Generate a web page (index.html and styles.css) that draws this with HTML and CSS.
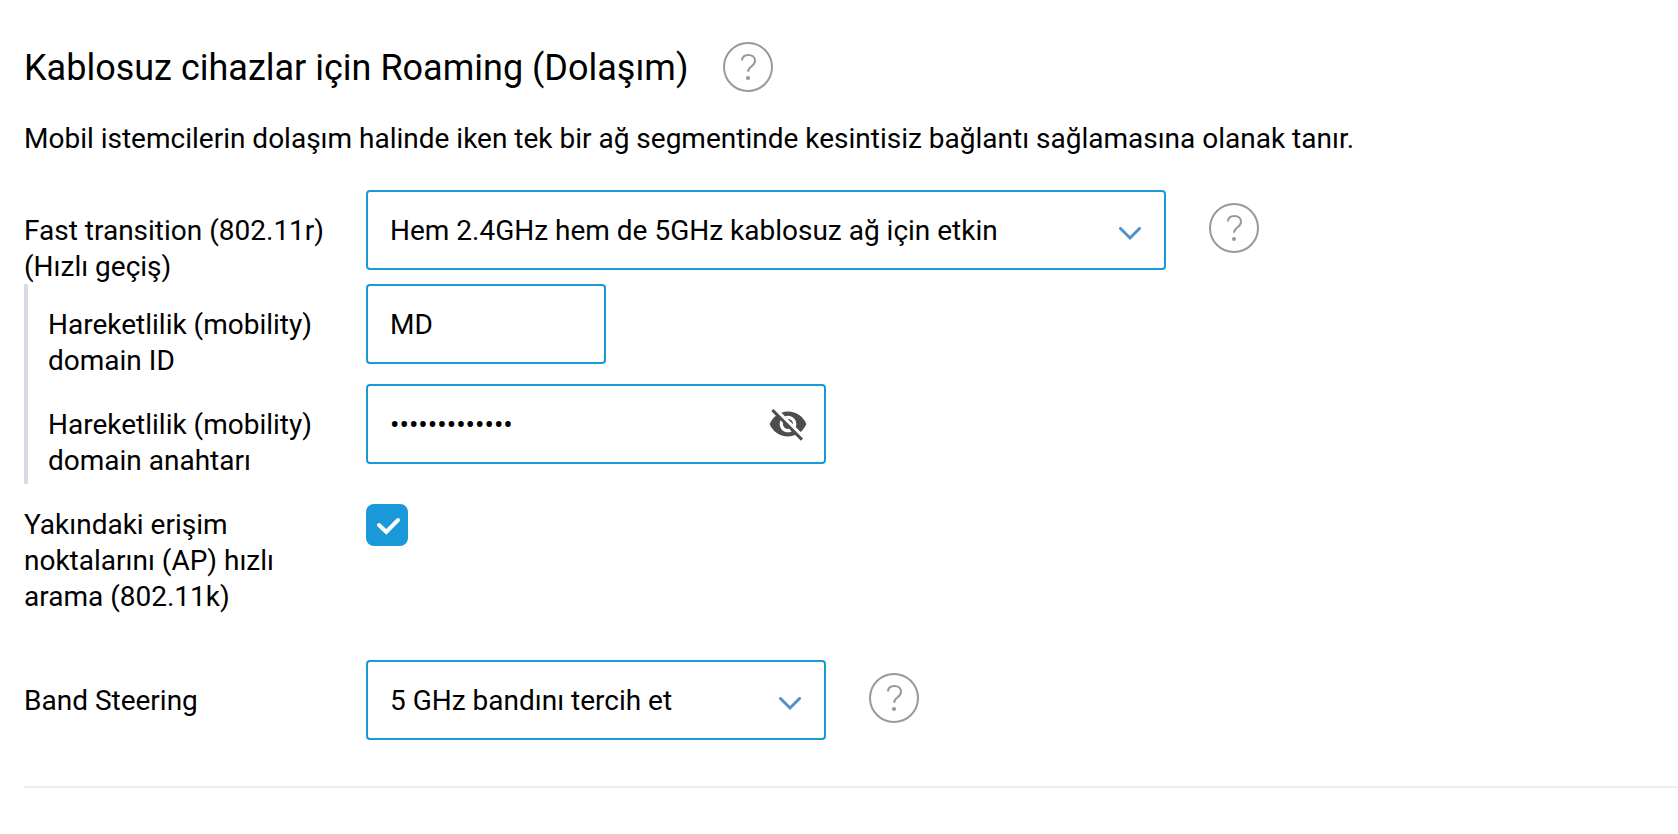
FILE: index.html
```html
<!DOCTYPE html>
<html lang="tr">
  <head>
    <meta charset="utf-8">
    <title>Kablosuz cihazlar için Roaming</title>
    <link rel="stylesheet" href="styles.css">
  </head>
  <body>
    <!-- shared icons -->
    <svg class="sprite" aria-hidden="true">
      <symbol id="icon-help" viewBox="0 0 50 50">
        <circle cx="25" cy="25" r="24" fill="none" stroke="currentColor" stroke-width="2" />
        <path d="M19 18.5c.2-3.400 2.700-5.500 6.400-5.500 3.900 0 6.600 2.200 6.600 5.700 0 2.600-1.300 4-3.400 5.600-2.300 1.700-3.500 3-3.500 5.500" fill="none" stroke="currentColor" stroke-width="2" />
        <circle cx="25" cy="36" r="2.100" fill="currentColor" />
      </symbol>
    </svg>

    <form class="roaming" action="">
      <div class="heading">
        <h1>Kablosuz cihazlar için Roaming (Dolaşım)</h1>
        <button type="button" class="help" aria-label="Yardım"><svg><use href="#icon-help" /></svg></button>
      </div>
      <p class="intro">Mobil istemcilerin dolaşım halinde iken tek bir ağ segmentinde kesintisiz bağlantı sağlamasına olanak tanır.</p>

      <div class="row">
        <label for="ft">Fast transition (802.11r) (Hızlı geçiş)</label>
        <div class="select wide">
          <select id="ft">
            <option>Hem 2.4GHz hem de 5GHz kablosuz ağ için etkin</option>
          </select>
          <svg class="arrow" viewBox="0 0 22 14"><path d="M1.500 1.500 11 11l9.500-9.500" /></svg>
        </div>
        <button type="button" class="help" aria-label="Yardım"><svg><use href="#icon-help" /></svg></button>
      </div>

      <div class="nested">
        <div class="row">
          <label for="mdid">Hareketlilik (mobility) domain ID</label>
          <input type="text" class="short" id="mdid" value="MD" autocomplete="off">
        </div>
        <div class="row">
          <label for="mdkey">Hareketlilik (mobility) domain anahtarı</label>
          <div class="password">
            <input type="password" id="mdkey" value="domainkey1234" autocomplete="off">
            <button type="button" class="eye" aria-label="Göster">
              <svg viewBox="0 0 24 24"><path d="M12 7c2.760 0 5 2.240 5 5 0 .65-.13 1.260-.36 1.830l2.920 2.920c1.510-1.260 2.700-2.890 3.430-4.750-1.730-4.390-6-7.500-11-7.500-1.400 0-2.740.25-3.980.7l2.160 2.160C10.740 7.130 11.350 7 12 7zM2 4.270l2.280 2.280.46.46C3.080 8.300 1.780 10.020 1 12c1.730 4.390 6 7.500 11 7.500 1.550 0 3.030-.3 4.380-.84l.42.42L19.730 22 21 20.730 3.270 3 2 4.270zM7.530 9.800l1.550 1.550c-.05.21-.08.43-.08.65 0 1.660 1.340 3 3 3 .22 0 .44-.03.65-.08l1.550 1.550c-.67.33-1.410.53-2.200.53-2.760 0-5-2.240-5-5 0-.79.2-1.530.53-2.200zm4.310-.78l3.150 3.150.02-.16c0-1.660-1.340-3-3-3l-.17.01z" /></svg>
            </button>
          </div>
        </div>
      </div>

      <div class="row">
        <label for="rrm">Yakındaki erişim noktalarını (AP) hızlı arama (802.11k)</label>
        <div class="check">
          <input type="checkbox" id="rrm" checked>
          <svg viewBox="0 0 42 42"><path d="M13 21l7.300 7L32 16" /></svg>
        </div>
      </div>

      <div class="row band">
        <label for="bs">Band Steering</label>
        <div class="select">
          <select id="bs">
            <option>5 GHz bandını tercih et</option>
          </select>
          <svg class="arrow" viewBox="0 0 22 14"><path d="M1.500 1.500 11 11l9.500-9.500" /></svg>
        </div>
        <button type="button" class="help" aria-label="Yardım"><svg><use href="#icon-help" /></svg></button>
      </div>
      <hr>
    </form>
  </body>
</html>
```
FILE: styles.css
```css
* { box-sizing: border-box; }

body {
  margin: 0; background: #fff; color: #000;
  font-family: Roboto, "Liberation Sans", sans-serif; font-size: 28px; line-height: 36px;
}

.sprite { display: none; }

.roaming { padding: 42px 0 44px 24px; }

.heading { display: flex; align-items: center; }
.heading h1 { margin: 0; padding-top: 2px; font-size: 36px; font-weight: 400; line-height: 48px; }
.heading .help { margin: 0 0 0 35px; }

.intro { margin: 29px 0 33px; }

.row { display: flex; align-items: flex-start; }
.row > label { flex: none; width: 342px; padding-top: 23px; padding-right: 36px; margin-bottom: -1px; }

/* fields that depend on fast transition */
.nested { border-left: 4px solid #d7dbe5; padding-left: 20px; }
.nested .row { min-height: 100px; }
.nested .row > label { width: 318px; }

input[type=text], input[type=password], select {
  height: 80px; width: 100%; margin: 0; padding: 0 22px;
  border: 2px solid #1a99d8; border-radius: 4px; background: #fff; color: #000;
  font: inherit; outline: none;
}
select { appearance: none; display: block; padding-top: 2px; }
input.short { width: 240px; }

.select, .password { position: relative; width: 460px; }
.select.wide { width: 800px; }

.arrow {
  position: absolute; right: 25px; top: 37px; width: 22px; height: 14px; pointer-events: none;
  fill: none; stroke: #5290cc; stroke-width: 3; stroke-linecap: round;
}

.help {
  flex: none; width: 50px; height: 50px; margin: 13px 0 0 43px; padding: 0;
  border: none; background: none; color: #999; cursor: pointer;
}
.help svg { display: block; width: 50px; height: 50px; }

.eye {
  position: absolute; right: 18px; top: 20px; width: 40px; height: 40px; padding: 0;
  border: none; background: none; cursor: pointer;
}
.eye svg { display: block; width: 40px; height: 40px; fill: #4d4d4d; }

.check { position: relative; width: 42px; height: 42px; margin-top: 20px; }
.check input {
  appearance: none; display: block; width: 42px; height: 42px; margin: 0;
  border: 2px solid #1a99d8; border-radius: 8px;
}
.check input:checked { background: #1a99d8; }
.check svg {
  position: absolute; left: 0; top: 0; width: 42px; height: 42px; pointer-events: none;
  fill: none; stroke: #fff; stroke-width: 4; stroke-linecap: round;
}
.check input:not(:checked) + svg { display: none; }

.band { margin-top: 46px; }

hr { margin: 46px 0 0; border: none; border-top: 2px solid #eee; }
```
